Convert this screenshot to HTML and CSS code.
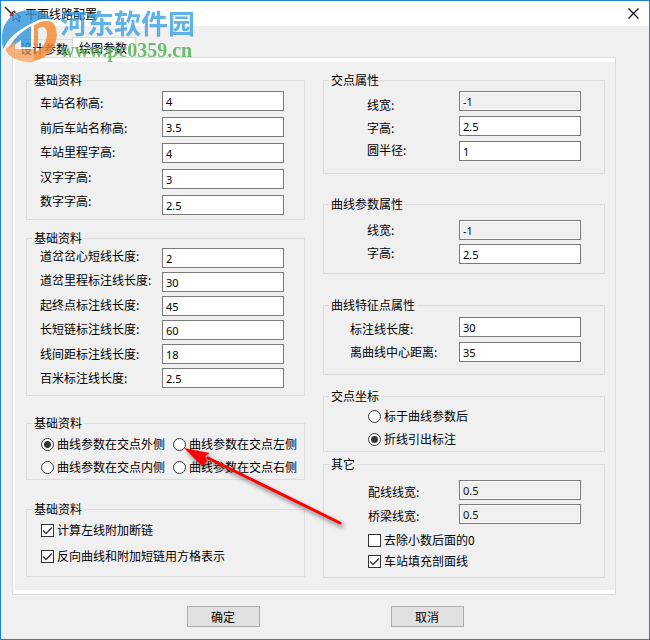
FILE: index.html
```
<!DOCTYPE html>
<html lang="zh-CN">
<head>
    <meta charset="UTF-8">
    <meta name="viewport" content="width=device-width, initial-scale=1.0">
    <title>平面线路配置</title>
    <link rel="stylesheet" href="styles.css">
</head>
<body>

    <div class="window">
        <!-- 标题栏 -->
        <div class="titlebar">
            <svg class="app-icon" width="18" height="18" viewBox="0 0 18 18">
                <path d="M1 2L14 15" stroke="#222" stroke-width="1.5"/>
                <path d="M6 11L11 6" stroke="#d22" stroke-width="2"/>
                <path d="M9 6V16L12 13L15 17L16 16L14 12H17Z" fill="#fff" stroke="#223" />
            </svg>
            <h1>平面线路配置</h1>
            <button class="close" type="button" aria-label="关闭">
                <svg width="11" height="11" viewBox="0 0 11 11"><path d="M.5 .5L10.5 10.5M10.5 .5L.5 10.5" stroke="#000" stroke-width="1.2"/></svg>
            </button>
        </div>

        <!-- 选项卡 -->
        <div class="tabs">
            <button class="tab" type="button">设计参数</button>
            <button class="tab active" type="button">绘图参数</button>
        </div>

        <form class="panel">
            <div class="page">
                <div class="column">
                    <fieldset class="group station">
                        <legend>基础资料</legend>
                        <div class="fields">
                            <div class="labels">
                                <label for="a1">车站名称高:</label>
                                <label for="a2">前后车站名称高:</label>
                                <label for="a3">车站里程字高:</label>
                                <label for="a4">汉字字高:</label>
                                <label for="a5">数字字高:</label>
                            </div>
                            <div class="inputs">
                                <input type="text" id="a1" value="4">
                                <input type="text" id="a2" value="3.5">
                                <input type="text" id="a3" value="4">
                                <input type="text" id="a4" value="3">
                                <input type="text" id="a5" value="2.5">
                            </div>
                        </div>
                    </fieldset>

                    <fieldset class="group lengths">
                        <legend>基础资料</legend>
                        <div class="fields">
                            <div class="labels">
                                <label for="b1">道岔岔心短线长度:</label>
                                <label for="b2">道岔里程标注线长度:</label>
                                <label for="b3">起终点标注线长度:</label>
                                <label for="b4">长短链标注线长度:</label>
                                <label for="b5">线间距标注线长度:</label>
                                <label for="b6">百米标注线长度:</label>
                            </div>
                            <div class="inputs">
                                <input type="text" id="b1" value="2">
                                <input type="text" id="b2" value="30">
                                <input type="text" id="b3" value="45">
                                <input type="text" id="b4" value="60">
                                <input type="text" id="b5" value="18">
                                <input type="text" id="b6" value="2.5">
                            </div>
                        </div>
                    </fieldset>

                    <fieldset class="group side">
                        <legend>基础资料</legend>
                        <div class="options">
                            <label class="choice"><input type="radio" name="side" checked>曲线参数在交点外侧</label>
                            <label class="choice"><input type="radio" name="side">曲线参数在交点左侧</label>
                            <label class="choice"><input type="radio" name="side">曲线参数在交点内侧</label>
                            <label class="choice"><input type="radio" name="side">曲线参数在交点右侧</label>
                        </div>
                    </fieldset>

                    <fieldset class="group chain">
                        <legend>基础资料</legend>
                        <div class="options">
                            <label class="choice"><input type="checkbox" checked>计算左线附加断链</label>
                            <label class="choice"><input type="checkbox" checked>反向曲线和附加短链用方格表示</label>
                        </div>
                    </fieldset>
                </div>

                <div class="column right">
                    <fieldset class="group cross">
                        <legend>交点属性</legend>
                        <div class="fields">
                            <div class="labels">
                                <label for="c1">线宽:</label>
                                <label for="c2">字高:</label>
                                <label for="c3">圆半径:</label>
                            </div>
                            <div class="inputs">
                                <input type="text" id="c1" value="-1" disabled>
                                <input type="text" id="c2" value="2.5">
                                <input type="text" id="c3" value="1">
                            </div>
                        </div>
                    </fieldset>

                    <fieldset class="group curve">
                        <legend>曲线参数属性</legend>
                        <div class="fields">
                            <div class="labels">
                                <label for="d1">线宽:</label>
                                <label for="d2">字高:</label>
                            </div>
                            <div class="inputs">
                                <input type="text" id="d1" value="-1" disabled>
                                <input type="text" id="d2" value="2.5">
                            </div>
                        </div>
                    </fieldset>

                    <fieldset class="group feature">
                        <legend>曲线特征点属性</legend>
                        <div class="fields">
                            <div class="labels">
                                <label for="e1">标注线长度:</label>
                                <label for="e2">离曲线中心距离:</label>
                            </div>
                            <div class="inputs">
                                <input type="text" id="e1" value="30">
                                <input type="text" id="e2" value="35">
                            </div>
                        </div>
                    </fieldset>

                    <fieldset class="group coord">
                        <legend>交点坐标</legend>
                        <div class="options">
                            <label class="choice"><input type="radio" name="coord">标于曲线参数后</label>
                            <label class="choice"><input type="radio" name="coord" checked>折线引出标注</label>
                        </div>
                    </fieldset>

                    <fieldset class="group other">
                        <legend>其它</legend>
                        <div class="fields">
                            <div class="labels">
                                <label for="f1">配线线宽:</label>
                                <label for="f2">桥梁线宽:</label>
                            </div>
                            <div class="inputs">
                                <input type="text" id="f1" value="0.5" disabled>
                                <input type="text" id="f2" value="0.5" disabled>
                            </div>
                        </div>
                        <div class="options">
                            <label class="choice"><input type="checkbox">去除小数后面的0</label>
                            <label class="choice"><input type="checkbox" checked>车站填充剖面线</label>
                        </div>
                    </fieldset>
                </div>
            </div>
        </form>

        <div class="footer">
            <button class="btn" type="button">确定</button>
            <button class="btn" type="button">取消</button>
        </div>

        <!-- 水印 -->
        <div class="watermark">
            <svg width="58" height="58" viewBox="0 0 58 58">
                <path d="M1 32C1 15 13 4 29 4C39 4 47 8 52 14C43 12 35 15 29 19C18 25 8 33 3 44C1 40 1 36 1 32Z" fill="#2f93da"/>
                <path d="M7 44C11 35 18 27 30 20V41H20V34Z" fill="#2f93da"/>
                <path d="M33 19C41 14 50 13 53 18C58 27 56 38 49 46C45 51 39 54 33 55V47C41 43 46 36 46 28C46 21 41 19 37 23V41H33Z" fill="#f5862c"/>
                <path d="M4 43L14 36V43H33V56C22 57 9 54 4 43Z" fill="#f7923f" opacity=".8"/>
                <path d="M3 44C8 32 18 25 30 19C38 14 47 12 53 16" fill="none" stroke="#fff" stroke-width="2"/>
                <path d="M31 20V42H18" fill="none" stroke="#fff" stroke-width="2"/>
            </svg>
            <div class="watermark-text">
                <span class="site">河东软件园</span>
                <span class="url">www.pc0359.cn</span>
            </div>
        </div>

        <!-- 红色箭头 -->
        <svg class="arrow" width="170" height="90" viewBox="0 0 170 90">
            <path d="M25 15L157 80" stroke="#f00" stroke-width="3" stroke-linecap="round"/>
            <path d="M1 5L27 10L22 13L24 18L19 23Z" fill="#f00"/>
        </svg>
    </div>

</body>
</html>
```

FILE: styles.css
```
* {
    box-sizing: border-box;
}
body {
    margin: 0;
    font-family: "Noto Sans CJK SC", sans-serif;
    font-size: 12px;
    line-height: 16px;
    color: #000;
}
button, input {
    font: inherit;
    color: inherit;
    margin: 0;
}
.window {
    position: relative;
    min-height: 100vh;
    background-color: #f0f0f0;
    border: 1px solid #1f82d0;
}

/* 标题栏 */
.titlebar {
    display: flex;
    align-items: center;
    height: 25px;
    padding: 0 6px 0 3px;
    background-color: white;
}
.titlebar h1 {
    flex: 1;
    margin: 0 0 0 3px;
    font-size: 12px;
    font-weight: normal;
}
.close {
    display: flex;
    padding: 4px;
    background: none;
    border: none;
}

/* 选项卡 */
.tabs {
    display: flex;
    align-items: flex-end;
    padding: 11px 13px 0;
}
.tab {
    height: 18px;
    padding: 0 5px;
    border: 1px solid #dcdcdc;
    border-bottom: none;
    background-color: #f0f0f0;
    line-height: 18px;
}
.tab.active {
    height: 20px;
    margin-left: -2px;
    padding: 0 8px 0 6px;
    background-color: white;
}
.panel {
    margin: 0 33px 0 11px;
    padding: 4px 0 4px 2px;
    background-color: white;
    border: 1px solid #dcdcdc;
}
.page {
    display: grid;
    grid-template-columns: 279fr 282fr;
    gap: 18px;
    padding: 10px 10px 12px 11px;
    background-color: #f0f0f0;
}

/* 分组框 */
.group {
    min-width: 0;
    margin: 0;
    padding: 0 20px 0 13px;
    border: 1px solid #dcdcdc;
}
.group legend {
    margin-left: -8px;
    padding: 0 2px;
}
.fields {
    display: flex;
}
.labels {
    display: flex;
    flex-direction: column;
    justify-content: space-between;
    flex: 0 0 122px;
    white-space: nowrap;
}
.inputs {
    display: flex;
    flex-direction: column;
    flex: 1;
    gap: 4px;
    min-width: 0;
}
.inputs input {
    width: 100%;
    height: 20px;
    padding: 0 3px;
    border: 1px solid #7a7a7a;
    border-radius: 0;
    background-color: white;
    font-family: "Noto Sans", sans-serif;
    font-size: 11px;
}
.inputs input:disabled {
    background-color: #f0f0f0;
    box-shadow: inset 0 0 0 1px white;
    color: #111;
}

/* 左列 */
.station {
    padding-top: 3px;
    padding-bottom: 4px;
}
.station .inputs {
    gap: 6px;
}
.station .labels {
    padding: 4px 0 6px;
}
.lengths {
    margin-top: 10px;
    padding-top: 2px;
    padding-bottom: 7px;
}
.lengths .labels {
    padding-bottom: 2px;
}
.side {
    margin-top: 19px;
    padding: 5px 4px 4px 14px;
}
.side .options {
    display: grid;
    grid-template-columns: 132px auto;
    row-gap: 7px;
}
.chain {
    margin-top: 21px;
    padding: 5px 4px 12px 14px;
}
.side legend, .chain legend {
    margin-left: -9px;
}
.chain .options {
    gap: 10px;
}

/* 右列 */
.right .group {
    padding-left: 43px;
    padding-right: 23px;
}
.right .group legend {
    margin-left: -38px;
}
.right .labels {
    flex-basis: 92px;
}
.cross {
    padding-top: 3px;
    padding-bottom: 12px;
}
.cross .inputs {
    gap: 5px;
}
.cross .labels {
    padding: 6px 0 3px;
}
.curve {
    margin-top: 22px;
    padding-top: 8px;
    padding-bottom: 9px;
}
.curve .labels {
    padding: 2px 0 3px;
}
.right .feature {
    margin-top: 23px;
    padding: 4px 23px 12px 26px;
}
.right .feature legend {
    margin-left: -21px;
}
.feature .labels {
    flex-basis: 109px;
    padding: 4px 0 2px;
}
.feature .inputs {
    gap: 5px;
}
.coord {
    margin-top: 13px;
    padding-top: 4px;
    padding-bottom: 4px;
}
.right .coord, .right .other {
    padding-left: 44px;
}
.right .coord legend, .right .other legend {
    margin-left: -39px;
}
.coord .options {
    gap: 7px;
}
.other {
    margin-top: 4px;
    padding-top: 8px;
    padding-bottom: 8px;
}
.other .labels {
    padding-top: 4px;
}
.right .other .labels {
    flex-basis: 91px;
}
.other .options {
    gap: 5px;
    margin-top: 8px;
}

/* 单选和复选 */
.options {
    display: flex;
    flex-direction: column;
}
.choice {
    display: flex;
    align-items: center;
    gap: 3px;
    white-space: nowrap;
}
.choice input {
    appearance: none;
    flex: none;
    width: 13px;
    height: 13px;
    border: 1px solid #333;
    background-color: white;
}
.choice input[type="radio"] {
    border-radius: 50%;
}
.choice input[type="radio"]:checked {
    background-image: radial-gradient(circle, #333 3px, transparent 4px);
}
.choice input[type="checkbox"]:checked {
    background-image: url("data:image/svg+xml,%3Csvg xmlns='http://www.w3.org/2000/svg' viewBox='0 0 11 11'%3E%3Cpath d='M1 5.5L4 8.5L10 2.5' fill='none' stroke='%23333' stroke-width='1.3'/%3E%3C/svg%3E");
}

/* 底部按钮 */
.footer {
    display: flex;
    justify-content: center;
    gap: 131px;
    padding: 11px 0 12px;
}
.btn {
    width: 73px;
    height: 21px;
    padding: 0;
    border: 1px solid #adadad;
    background-color: #e1e1e1;
}

/* 水印和箭头 */
.watermark {
    position: absolute;
    top: 5px;
    left: 0;
    display: flex;
    gap: 1px;
    opacity: 0.8;
    pointer-events: none;
}
.watermark-text {
    display: flex;
    flex-direction: column;
    white-space: nowrap;
}
.site {
    font-size: 27px;
    font-weight: bold;
    line-height: 34px;
    color: #3a9fe0;
}
.url {
    font-family: "Liberation Serif", serif;
    font-size: 20px;
    font-weight: bold;
    line-height: 20px;
    color: #4caf50;
}
.arrow {
    position: absolute;
    top: 442px;
    left: 182px;
    pointer-events: none;
    filter: drop-shadow(2px 3px 2px rgba(0, 0, 0, 0.5));
}
```
